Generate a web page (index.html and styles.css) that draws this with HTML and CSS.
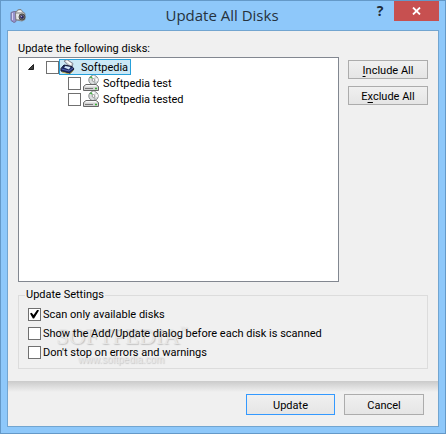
FILE: index.html
```html
<!DOCTYPE html>
<html lang="en">
<head>
    <meta charset="UTF-8">
    <meta name="viewport" content="width=device-width, initial-scale=1.0">
    <title>Update All Disks</title>
    <link rel="stylesheet" href="styles.css">
</head>
<body>

    <!-- shared icons -->
    <svg class="sprites" width="0" height="0" aria-hidden="true">
        <symbol id="disk" viewBox="0 0 16 16">
            <circle cx="10.5" cy="5" r="4.7" fill="#dcdfdf" stroke="#858a8a"/>
            <path d="M10.5 5L9 .8l3-.3zM10.5 5l4-2 .5 3z" fill="#fff"/>
            <path d="M10.5 5l3 3.5-2.5 1z" fill="#b0b6b6"/>
            <path d="M6.5 2.5l2-1.500 1.500 3z" fill="#48ad48"/>
            <circle cx="10.5" cy="5" r="1.4" fill="#fff" stroke="#777" stroke-width=".7"/>
            <path d="M3 9.500h10l2.500 2v4H.5v-4z" fill="#d2d2d2" stroke="#666"/>
            <path d="M3.200 10h9.600l1.500 1.500H1.700z" fill="#f8f8f8"/>
            <path d="M2 13.500h8" stroke="#777"/>
            <path d="M12 13.500h2" stroke="#35b035" stroke-width="1.500"/>
        </symbol>
    </svg>

    <div class="window">
        <header class="titlebar">
            <svg class="app-icon" width="16" height="16" viewBox="0 0 16 16" aria-hidden="true">
                <path d="M1 4.500l3-1h2v10l-2 1-3-2z" fill="#9690cb" stroke="#77749c"/>
                <path d="M2.500 5v7" stroke="#d4d0f2"/>
                <path d="M5.500 5l1-2 2-1.500h2.500l1.500 2 2.500 2v6l-3 1.500-6-1z" fill="#b4b4b4" stroke="#777" stroke-width=".8"/>
                <path d="M7 4l2-1.500h2l1 1.500z" fill="#f4f4f4"/>
                <path d="M6 6h3v5H6.500z" fill="#e6e6e6"/>
                <circle cx="12" cy="9" r="3" fill="#777" stroke="#4b4b4b"/>
                <circle cx="12" cy="9" r="1.800" fill="#272259"/>
                <circle cx="11.500" cy="8.500" r=".7" fill="#a39ce0"/>
            </svg>
            <h1>Update All Disks</h1>
            <div class="caption-buttons">
                <button class="help" type="button" aria-label="Help">?</button>
                <button class="close" type="button" aria-label="Close">
                    <svg width="9" height="8" viewBox="0 0 9 8"><path d="M1 0.5l7 7M8 0.5l-7 7" stroke="#fff" stroke-width="1.8"/></svg>
                </button>
            </div>
        </header>

        <form class="client">
            <div class="main">
                <div class="list-label">Update the following disks:</div>
                <div class="disks">
                    <ul class="tree">
                        <li class="root">
                            <svg class="arrow" width="6" height="6" viewBox="0 0 6 6"><path d="M5.5 0.5v5h-5z" fill="#404040" stroke="#222"/></svg>
                            <input type="checkbox" id="disk-root">
                            <label class="selected" for="disk-root">
                                <svg width="16" height="16" viewBox="0 0 16 16">
                                    <path d="M5 2l3-1.500 6 4-1 4-3-1z" fill="#c5cacd" stroke="#778" stroke-width=".8"/>
                                    <path d="M6.500 2l1.500-.5 4.500 3-.5 2z" fill="#fff"/>
                                    <path d="M2 9.500l3-3.500 8 1.500 2 2.500-4 4.500-9-2.500z" fill="#1b2862" stroke="#161a36"/>
                                    <path d="M5 8.500l1.500-1.500 5 1-1.500 2.500z" fill="#d5e8fa"/>
                                    <path d="M2.500 10l7.500 2 4-3" fill="none" stroke="#5968b5"/>
                                    <path d="M3 13l7.500 2 4-3.500" fill="none" stroke="#b5a34b"/>
                                </svg>
                                <span>Softpedia</span>
                            </label>
                        </li>
                        <li class="child">
                            <input type="checkbox" id="disk-test">
                            <label for="disk-test">
                                <svg width="16" height="16"><use href="#disk"/></svg>
                                <span>Softpedia test</span>
                            </label>
                        </li>
                        <li class="child">
                            <input type="checkbox" id="disk-tested">
                            <label for="disk-tested">
                                <svg width="16" height="16"><use href="#disk"/></svg>
                                <span>Softpedia tested</span>
                            </label>
                        </li>
                    </ul>
                    <div class="side">
                        <button type="button"><u>I</u>nclude All</button>
                        <button type="button">E<u>x</u>clude All</button>
                    </div>
                </div>

                <fieldset class="settings">
                    <legend>Update Settings</legend>
                    <div class="watermark" aria-hidden="true">
                        <div class="brand">SOFTPEDIA<small>™</small></div>
                        <div class="site">www.softpedia.com</div>
                    </div>
                    <div class="option">
                        <input type="checkbox" id="scan" checked>
                        <label for="scan">Scan only available disks</label>
                    </div>
                    <div class="option">
                        <input type="checkbox" id="show">
                        <label for="show">Show the Add/Update dialog before each disk is scanned</label>
                    </div>
                    <div class="option">
                        <input type="checkbox" id="nostop">
                        <label for="nostop">Don't stop on errors and warnings</label>
                    </div>
                </fieldset>
            </div>

            <footer class="actions">
                <button class="default" type="button">Update</button>
                <button type="button">Cancel</button>
            </footer>
        </form>
    </div>

</body>
</html>
```

FILE: styles.css
```css
* {
    margin: 0;
    padding: 0;
    box-sizing: border-box;
}
body {
    font-family: Roboto, sans-serif;
    font-size: 11px;
    line-height: 16px;
    color: #000;
}
button,
input {
    font: inherit;
    color: inherit;
}
.sprites {
    position: absolute;
}

/* window frame */
.window {
    min-height: 100vh;
    display: flex;
    flex-direction: column;
    padding: 0 6px 6px;
    background: #8ec8fa;
    border: 1px solid #6499c8;
}
.titlebar {
    height: 29px;
    display: grid;
    grid-template-columns: 90px 1fr 92px;
    align-items: start;
}
.app-icon {
    margin: 7px 0 0 3px;
}
h1 {
    font-family: "Open Sans", sans-serif;
    font-size: 15px;
    font-weight: 400;
    line-height: 28px;
    text-align: center;
    color: #26323d;
}
.caption-buttons {
    display: flex;
    justify-content: flex-end;
}
.caption-buttons button {
    height: 20px;
    border: none;
}
.help {
    width: 28px;
    background: none;
    font-family: "Open Sans", sans-serif;
    font-size: 14px;
    font-weight: 700;
    line-height: 20px;
    color: #1f2c38;
}
.close {
    width: 45px;
    display: flex;
    align-items: center;
    justify-content: center;
    background: #c75050;
}

/* dialog body */
.client {
    flex: 1;
    display: flex;
    flex-direction: column;
    background: #f0f0f0;
    border: 1px solid #72a5d0;
}
.main {
    flex: 1;
    display: flex;
    flex-direction: column;
    padding: 9px 10px 12px;
}
.list-label {
    height: 17px;
    line-height: 18px;
}
.disks {
    flex: 1;
    display: flex;
    gap: 9px;
}
.tree {
    flex: 1;
    list-style: none;
    padding: 1px 0 0 9px;
    background: #fff;
    border: 1px solid #828790;
}
.tree li {
    height: 16px;
    display: flex;
    align-items: center;
}
.tree label {
    height: 16px;
    display: flex;
    align-items: center;
    gap: 4px;
}
.tree span {
    line-height: 14px;
    padding-top: 2px;
}
.arrow {
    margin-right: 12px;
}
.tree .child {
    padding-left: 40px;
}
.child label {
    margin-left: 2px;
}
.tree .selected {
    gap: 6px;
    padding-right: 3px;
    background: #cbe8f6;
    outline: 1px solid #26a0da;
    outline-offset: -1px;
}
input[type="checkbox"] {
    appearance: none;
    flex: none;
    width: 13px;
    height: 13px;
    display: grid;
    place-items: center;
    background: #fff;
    border: 1px solid #707070;
}
input[type="checkbox"]:checked::before {
    content: "";
    width: 9px;
    height: 9px;
    background: #000;
    clip-path: polygon(0 45%, 18% 35%, 40% 60%, 82% 0, 100% 12%, 45% 100%, 32% 100%);
}
.side {
    width: 80px;
    display: flex;
    flex-direction: column;
    gap: 7px;
    padding-top: 3px;
}
.side button,
.actions button {
    padding-top: 2px;
    line-height: 15px;
    background: linear-gradient(#f0f0f0, #e5e5e5);
    border: 1px solid #acacac;
}
.side button {
    height: 19px;
}
u {
    text-underline-offset: 2px;
}

/* settings group */
.settings {
    position: relative;
    margin-top: 5px;
    padding: 3px 9px 8px;
    border: 1px solid #dcdcdc;
}
.settings legend {
    margin-left: -3px;
    padding: 0 1px;
}
.option {
    position: relative;
    display: flex;
    align-items: center;
    gap: 2px;
    margin-bottom: 3px;
}
.option:last-child {
    margin-bottom: 0;
}
.option label {
    line-height: 14px;
    padding-top: 2px;
}
.watermark {
    position: absolute;
    top: 21px;
    left: 37px;
    color: #e6e6e6;
    text-shadow: 1px 1px 1px #c4c4c4;
}
.brand {
    font-family: "Liberation Serif", serif;
    font-size: 23px;
    line-height: 25px;
}
.brand small {
    font-size: 8px;
    vertical-align: top;
    line-height: 12px;
}
.site {
    padding: 4px 0 0 22px;
    font-family: "Liberation Sans", sans-serif;
    font-size: 10px;
    line-height: 14px;
}

/* bottom bar */
.actions {
    display: flex;
    justify-content: flex-end;
    gap: 9px;
    padding: 13px 14px 11px;
    background: linear-gradient(#cacaca, #f0f0f0 11px);
}
.actions button {
    width: 80px;
    height: 21px;
}
.actions .default {
    width: 89px;
    border-color: #3399ff;
}
```
